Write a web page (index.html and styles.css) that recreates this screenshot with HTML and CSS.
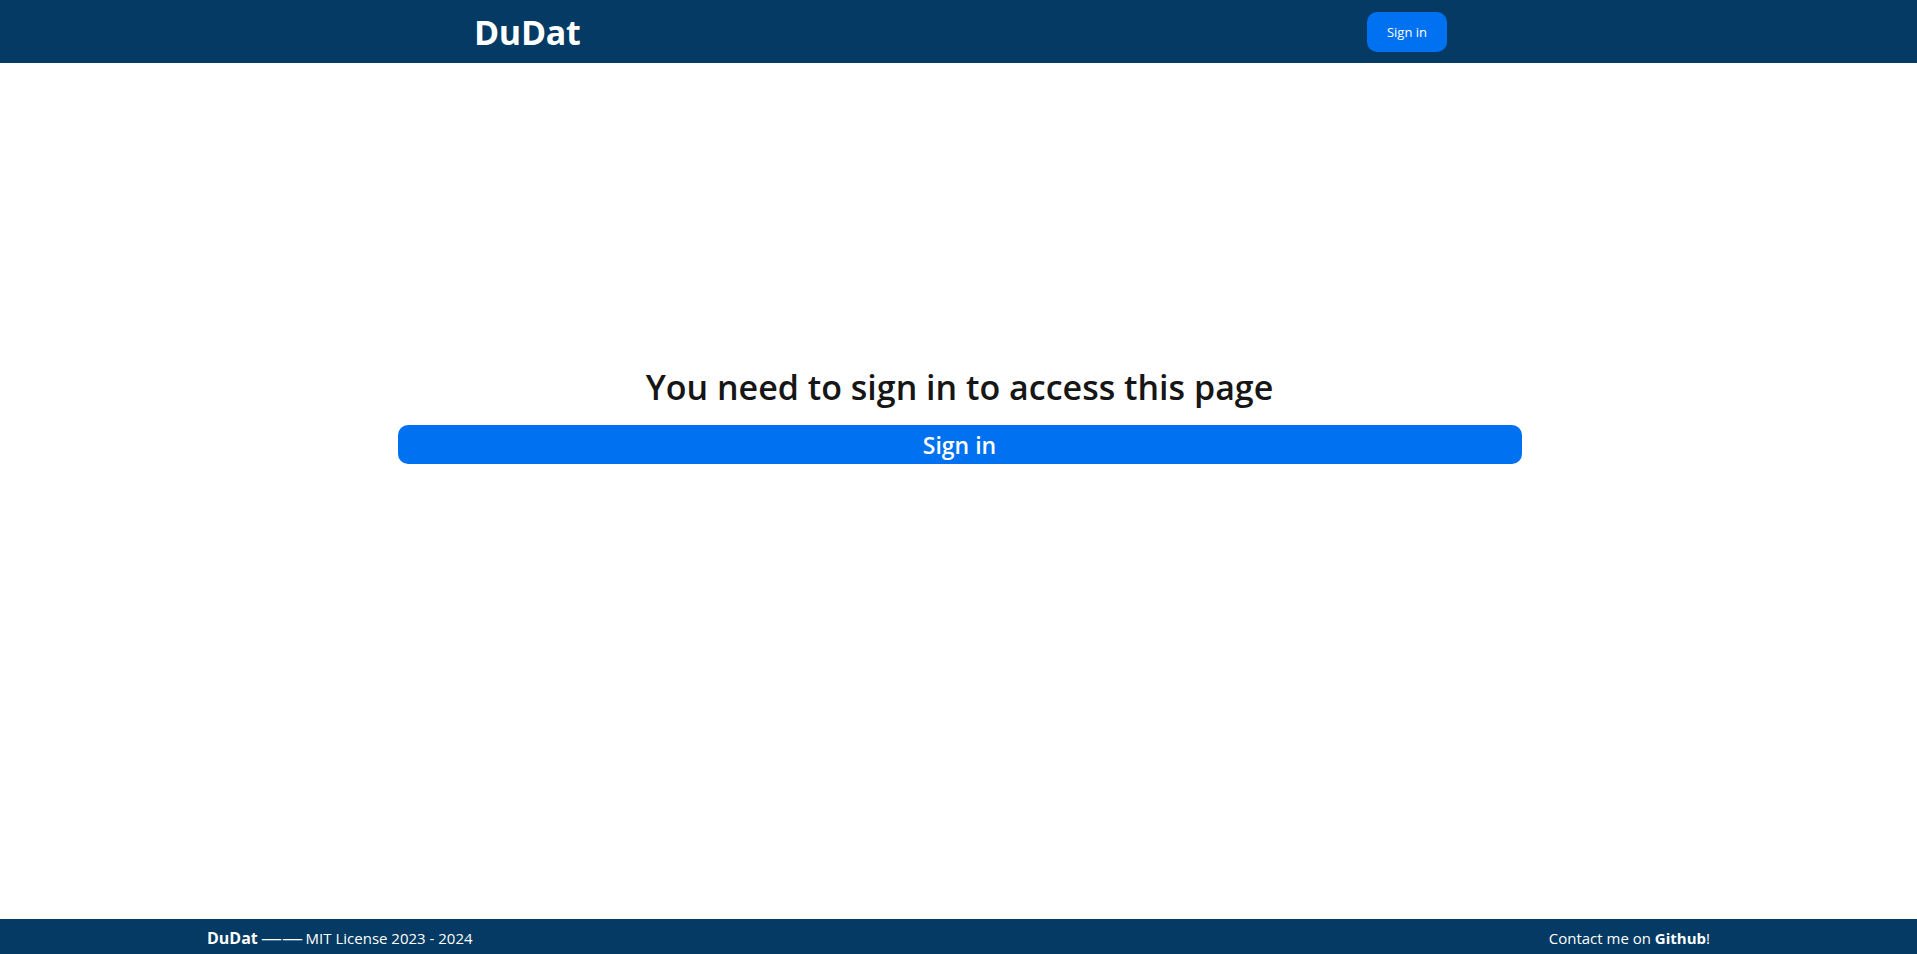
FILE: index.html
```html
<!DOCTYPE html>
<html lang="en">
<head>
<meta charset="utf-8">
<title>DuDat</title>
<link rel="stylesheet" href="styles.css">
</head>
<body>
<div class="page">
  <header class="topbar">
    <div class="topbar-inner">
      <a class="brand" href="#">DuDat</a>
      <button class="btn btn-small">Sign in</button>
    </div>
  </header>
  <main class="main">
    <div class="gate">
      <h1 class="gate-title">You need to sign in to access this page</h1>
      <button class="btn btn-wide">Sign in</button>
    </div>
  </main>
  <footer class="footer">
    <div class="footer-inner">
      <span><b class="footer-brand">DuDat</b> <span class="dash">——</span> MIT License 2023 - 2024</span>
      <span>Contact me on <b>Github</b>!</span>
    </div>
  </footer>
</div>
</body>
</html>
```
FILE: styles.css
```css
* { box-sizing: border-box; }
html, body { margin: 0; padding: 0; }
body {
  font-family: "Open Sans", "Noto Sans", sans-serif;
  color: #1b1b1b;
  background: #fff;
}
.page {
  min-height: 954px;
  display: flex;
  flex-direction: column;
}
.topbar {
  background: #043a63;
  height: 63px;
  display: flex;
  align-items: center;
}
.topbar-inner {
  width: 977px;
  margin: 0 auto;
  display: flex;
  justify-content: space-between;
  align-items: center;
  padding-left: 4px;
}
.brand {
  color: #fff;
  text-decoration: none;
  font-weight: 700;
  font-size: 34px;
  letter-spacing: -0.3px;
}
.btn {
  border: none;
  background: #0071f0;
  color: #fff;
  font-family: inherit;
  cursor: pointer;
}
.btn-small {
  width: 80px;
  height: 40px;
  border-radius: 10px;
  font-size: 13px;
}
.main {
  flex: 1;
  padding-top: 300px;
}
.gate {
  width: 1126px;
  margin: 0 auto;
  display: flex;
  flex-direction: column;
  align-items: center;
  padding-left: 2px;
}
.gate-title {
  margin: 0 0 14px;
  font-size: 34px;
  font-weight: 600;
  line-height: 48px;
  color: #161616;
}
.btn-wide {
  width: 100%;
  height: 39px;
  border-radius: 10px;
  font-size: 23px;
  font-weight: 600;
}
.footer {
  background: #043a63;
  height: 35px;
  color: #fff;
  font-size: 15px;
}
.footer-inner {
  width: 1503px;
  margin: 0 auto;
  height: 100%;
  display: flex;
  justify-content: space-between;
  align-items: center;
  padding-top: 2px;
}
.footer-inner b { font-weight: 700; }
.footer-brand { font-size: 16px; }
.dash {
  display: inline-block;
  transform: scaleX(1.4);
  margin: 0 5px;
}
```
